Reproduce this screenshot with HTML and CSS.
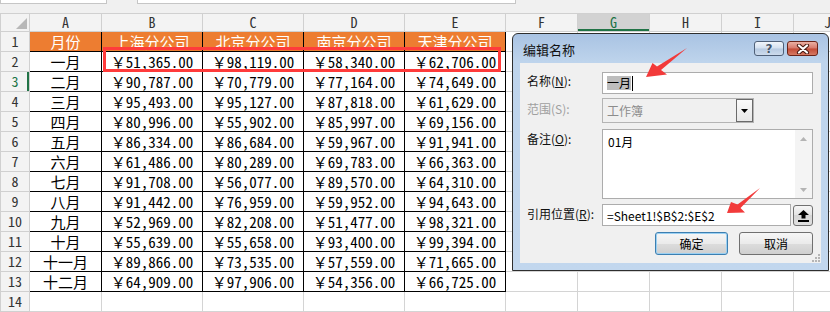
FILE: index.html
```html
<!DOCTYPE html>
<html lang="zh-CN">
<head>
    <meta charset="UTF-8">
    <title>编辑名称</title>
    <link rel="stylesheet" href="styles.css">
</head>
<body>
    <div class="topbar">
        <span class="namebox"></span>
        <span class="fxbox"></span>
    </div>

    <table class="sheet">
        <colgroup>
            <col class="w-row"><col class="w-a"><col class="w-b"><col class="w-b"><col class="w-b"><col class="w-b">
            <col class="w-a"><col class="w-a"><col class="w-a"><col class="w-a"><col class="w-a">
        </colgroup>
        <thead>
            <tr class="colhead">
                <th class="corner"><svg width="11" height="11" viewBox="0 0 11 11"><polygon points="11,0 11,11 0,11" fill="#b8b8b8"/></svg></th>
                <th>A</th><th>B</th><th>C</th><th>D</th><th>E</th><th>F</th><th class="active">G</th><th>H</th><th>I</th><th class="edge">J</th>
            </tr>
        </thead>
        <tbody>
            <tr><th>1</th><td class="b hd">月份</td><td class="b hd">上海分公司</td><td class="b hd">北京分公司</td><td class="b hd">南京分公司</td><td class="b hd">天津分公司</td><td></td><td></td><td></td><td></td><td></td></tr>
            <tr><th>2</th><td class="b">一月</td><td class="b">￥51,365.00</td><td class="b">￥98,119.00</td><td class="b">￥58,340.00</td><td class="b">￥62,706.00</td><td></td><td></td><td></td><td></td><td></td></tr>
            <tr><th class="active">3</th><td class="b">二月</td><td class="b">￥90,787.00</td><td class="b">￥70,779.00</td><td class="b">￥77,164.00</td><td class="b">￥74,649.00</td><td></td><td></td><td></td><td></td><td></td></tr>
            <tr><th>4</th><td class="b">三月</td><td class="b">￥95,493.00</td><td class="b">￥95,127.00</td><td class="b">￥87,818.00</td><td class="b">￥61,629.00</td><td></td><td></td><td></td><td></td><td></td></tr>
            <tr><th>5</th><td class="b">四月</td><td class="b">￥80,996.00</td><td class="b">￥55,902.00</td><td class="b">￥85,997.00</td><td class="b">￥69,156.00</td><td></td><td></td><td></td><td></td><td></td></tr>
            <tr><th>6</th><td class="b">五月</td><td class="b">￥86,334.00</td><td class="b">￥86,684.00</td><td class="b">￥59,967.00</td><td class="b">￥91,941.00</td><td></td><td></td><td></td><td></td><td></td></tr>
            <tr><th>7</th><td class="b">六月</td><td class="b">￥61,486.00</td><td class="b">￥80,289.00</td><td class="b">￥69,783.00</td><td class="b">￥66,363.00</td><td></td><td></td><td></td><td></td><td></td></tr>
            <tr><th>8</th><td class="b">七月</td><td class="b">￥91,708.00</td><td class="b">￥56,077.00</td><td class="b">￥89,570.00</td><td class="b">￥64,310.00</td><td></td><td></td><td></td><td></td><td></td></tr>
            <tr><th>9</th><td class="b">八月</td><td class="b">￥91,442.00</td><td class="b">￥76,959.00</td><td class="b">￥59,952.00</td><td class="b">￥94,643.00</td><td></td><td></td><td></td><td></td><td></td></tr>
            <tr><th>10</th><td class="b">九月</td><td class="b">￥52,969.00</td><td class="b">￥82,208.00</td><td class="b">￥51,477.00</td><td class="b">￥98,321.00</td><td></td><td></td><td></td><td></td><td></td></tr>
            <tr><th>11</th><td class="b">十月</td><td class="b">￥55,639.00</td><td class="b">￥55,658.00</td><td class="b">￥93,400.00</td><td class="b">￥99,394.00</td><td></td><td></td><td></td><td></td><td></td></tr>
            <tr><th>12</th><td class="b">十一月</td><td class="b">￥89,866.00</td><td class="b">￥73,535.00</td><td class="b">￥57,559.00</td><td class="b">￥71,665.00</td><td></td><td></td><td></td><td></td><td></td></tr>
            <tr><th>13</th><td class="b">十二月</td><td class="b">￥64,909.00</td><td class="b">￥97,906.00</td><td class="b">￥54,356.00</td><td class="b">￥66,725.00</td><td></td><td></td><td></td><td></td><td></td></tr>
            <tr><th>14</th><td></td><td></td><td></td><td></td><td></td><td></td><td></td><td></td><td></td><td></td></tr>
            <tr class="last"><th></th><td></td><td></td><td></td><td></td><td></td><td></td><td></td><td></td><td></td><td></td></tr>
        </tbody>
    </table>

    <!-- range highlight B2:E2 -->
    <div class="mark"></div>

    <div class="dialog">
        <div class="titlebar">
            <span class="title">编辑名称</span>
            <div class="tbtns">
                <span class="tbtn help">?</span>
                <span class="tbtn close">
                    <svg width="14" height="10" viewBox="0 0 14 10">
                        <path d="M3 1.5 L11 8.5 M11 1.5 L3 8.5" stroke="#4a1a12" stroke-width="4.2" stroke-linecap="round"/>
                        <path d="M3 1.5 L11 8.5 M11 1.5 L3 8.5" stroke="#fff" stroke-width="2.2" stroke-linecap="round"/>
                    </svg>
                </span>
            </div>
        </div>
        <div class="panel">
            <div class="row r-name">
                <label>名称(<u>N</u>):</label>
                <div class="field"><span class="selected">一月</span><span class="caret"></span></div>
            </div>
            <div class="row r-scope">
                <label class="disabled">范围(S):</label>
                <div class="combo">
                    <span>工作簿</span>
                    <span class="drop"><svg width="7" height="4" viewBox="0 0 7 4"><polygon points="0,0 7,0 3.5,4" fill="#000"/></svg></span>
                </div>
            </div>
            <div class="row r-note">
                <label>备注(<u>O</u>):</label>
                <div class="area">
                    <span class="note-text">01月</span>
                    <div class="vscroll">
                        <svg width="7" height="4" viewBox="0 0 7 4"><polygon points="3.5,0 7,4 0,4" fill="#b4b4b4"/></svg>
                        <svg width="7" height="4" viewBox="0 0 7 4"><polygon points="0,0 7,0 3.5,4" fill="#b4b4b4"/></svg>
                    </div>
                </div>
            </div>
            <div class="row r-ref">
                <label>引用位置(<u>R</u>):</label>
                <div class="refwrap">
                    <div class="field ref">=Sheet1!$B$2:$E$2</div>
                    <span class="refbtn">
                        <svg width="11" height="12" viewBox="0 0 11 12">
                            <polygon points="5.5,0 11,5 7.5,5 7.5,8.5 3.5,8.5 3.5,5 0,5" fill="#000"/>
                            <rect x="0" y="10" width="11" height="2" fill="#000"/>
                        </svg>
                    </span>
                </div>
            </div>
            <div class="actions">
                <button class="btn default">确定</button>
                <button class="btn cancel">取消</button>
            </div>
            <svg class="grip" width="10" height="10" viewBox="0 0 10 10">
                <g fill="#b5b5b5">
                    <rect x="8" y="2" width="2" height="2"/>
                    <rect x="5" y="5" width="2" height="2"/><rect x="8" y="5" width="2" height="2"/>
                    <rect x="2" y="8" width="2" height="2"/><rect x="5" y="8" width="2" height="2"/><rect x="8" y="8" width="2" height="2"/>
                </g>
            </svg>
        </div>
    </div>

    <svg class="arrows" width="830" height="312" viewBox="0 0 830 312">
        <polygon points="687,48 661,70 667,74.5 646,77 652.5,63 657,66.5" fill="#f23a3a"/>
        <polygon points="760,188 740.5,208 745,212.5 727,213 731,202 737.5,204.5" fill="#f23a3a"/>
    </svg>
</body>
</html>
```

FILE: styles.css
```css
body {
    margin: 0;
    width: 830px;
    height: 312px;
    overflow: hidden;
    position: relative;
    background: #fff;
    font-family: "Noto Sans CJK SC", sans-serif;
    color: #000;
}

/* formula bar remains */
.topbar {
    height: 13px;
    background: #f0f0f0;
    display: flex;
    align-items: flex-start;
}
.namebox,
.fxbox {
    height: 3px;
    background: #fff;
    border: 1px solid #c6c6c6;
    border-top: none;
}
.namebox {
    width: 105px;
}
.fxbox {
    margin-left: 30px;
    width: 377px;
}

/* worksheet */
.sheet {
    border-collapse: collapse;
    table-layout: fixed;
    width: 866px;
    font-family: "Noto Sans Mono CJK SC", "Noto Sans CJK SC", monospace;
}
.w-row { width: 29px; }
.w-a { width: 72px; }
.w-b { width: 101px; }

.sheet th,
.sheet td {
    border: 1px solid #d4d4d4;
    padding: 0;
    white-space: nowrap;
}
.sheet tr {
    height: 20px;
}
.sheet .colhead {
    height: 18px;
}
.sheet tr.last {
    height: 4px;
}
.sheet th {
    background: #f3f3f3;
    border-color: #d0d0d0;
    font-weight: normal;
    font-size: 14px;
    color: #333;
    text-align: center;
    line-height: 15px;
}
.sheet th.edge {
    text-align: left;
    padding-left: 30px;
    overflow: hidden;
}
.sheet th.corner {
    vertical-align: bottom;
    text-align: right;
}
.corner svg {
    display: block;
    margin: 0 2px 2px auto;
}
.colhead th.active {
    background: #d2d2d2;
    color: #217346;
    box-shadow: inset 0 -2px 0 #217346;
}
tbody th.active {
    color: #217346;
    box-shadow: inset -2px 0 0 #217346;
}
.sheet td {
    font-size: 15px;
    line-height: 17px;
    text-align: center;
}
.sheet td.b {
    border-color: #000;
}
.sheet td.hd {
    background: #ed7d31;
    color: #fff;
}

.mark {
    position: absolute;
    left: 103px;
    top: 47px;
    width: 398px;
    height: 25px;
    box-sizing: border-box;
    border: 3px solid #ff3b3b;
}

/* edit name dialog */
.dialog {
    position: absolute;
    left: 512px;
    top: 33px;
    width: 317px;
    height: 238px;
    box-sizing: border-box;
    border: 1px solid #2e2e2e;
    border-radius: 6px 6px 0 0;
    background: linear-gradient(#a9c3e3, #bed4ec 28px, #c2d7ee);
    padding: 0 7px 7px;
    font-size: 12px;
}
.titlebar {
    height: 29px;
    display: flex;
    align-items: center;
    justify-content: space-between;
}
.title {
    padding-left: 3px;
    font-size: 13px;
    padding-top: 2px;
    color: #111;
}
.tbtns {
    display: flex;
    gap: 3px;
    margin-right: 3px;
}
.tbtn {
    height: 15px;
    box-sizing: border-box;
    border-radius: 3px;
    display: flex;
    align-items: center;
    justify-content: center;
}
.help {
    width: 30px;
    border: 1px solid #4f6078;
    background: linear-gradient(#f0f5fb, #d3e0ef 48%, #b6cae2 52%, #cddbec);
    color: #44556a;
    font-weight: bold;
    font-size: 12px;
    font-family: "DejaVu Sans", sans-serif;
    text-shadow: 0 0 1px #fff;
}
.close {
    width: 31px;
    border: 1px solid #6b2318;
    background: linear-gradient(#eab0a3, #d7786a 48%, #c24a35 52%, #d67a64);
}

.panel {
    position: relative;
    height: 200px;
    background: #f0f0f0;
    padding: 9px 8px 0 7px;
    box-sizing: border-box;
}
.row {
    display: grid;
    grid-template-columns: 75px 211px;
}
.row label {
    padding-top: 1px;
    line-height: 15px;
    color: #111;
}
.row label.disabled {
    color: #a0a0a0;
}
.r-scope { margin-top: 4px; }
.r-note { margin-top: 6px; }
.r-ref { margin-top: 5px; }
.r-scope label { padding-top: 3px; }
.r-note label,
.r-ref label { padding-top: 2px; }

.field {
    height: 22px;
    box-sizing: border-box;
    border: 1px solid #acacac;
    background: #fff;
    display: flex;
    align-items: center;
    padding-left: 4px;
}
.selected {
    background: #bdbdbd;
    line-height: 14px;
    font-size: 12px;
}
.caret {
    width: 1px;
    height: 15px;
    background: #000;
    margin-left: 1px;
}
.combo {
    height: 25px;
    width: 152px;
    box-sizing: border-box;
    border: 1px solid #b4b4b4;
    background: #f0f0f0;
    color: #8c8c8c;
    display: flex;
    align-items: center;
    justify-content: space-between;
    padding-left: 4px;
}
.drop {
    width: 17px;
    height: 23px;
    box-sizing: border-box;
    border: 1px solid #6a6a6a;
    background: linear-gradient(#fafafa, #e8e8e8);
    display: flex;
    align-items: center;
    justify-content: center;
}
.area {
    height: 70px;
    box-sizing: border-box;
    border: 1px solid #acacac;
    background: #fff;
    display: flex;
    justify-content: space-between;
}
.note-text {
    padding: 4px 0 0 5px;
    line-height: 15px;
}
.vscroll {
    width: 17px;
    background: #f4f4f4;
    display: flex;
    flex-direction: column;
    justify-content: space-between;
    align-items: center;
    padding: 7px 0 6px;
    box-sizing: border-box;
}
.refwrap {
    display: flex;
    justify-content: space-between;
}
.ref {
    width: 189px;
    font-size: 12px;
}
.refbtn {
    width: 20px;
    height: 21px;
    box-sizing: border-box;
    border: 1px solid #707070;
    border-radius: 3px;
    background: linear-gradient(#f6f6f6, #e2e2e2 50%, #d6d6d6 50%, #e0e0e0);
    display: flex;
    align-items: center;
    justify-content: center;
    margin-top: 1px;
}
.actions {
    display: flex;
    justify-content: flex-end;
    gap: 11px;
    margin-top: 6px;
}
.btn {
    height: 23px;
    box-sizing: border-box;
    border: 1px solid #707070;
    border-radius: 3px;
    background: linear-gradient(#f6f6f6, #ebebeb 50%, #dddddd 50%, #cfcfcf);
    font-family: "Noto Sans CJK SC", sans-serif;
    font-size: 12px;
    padding: 0;
    color: #000;
}
.btn.default {
    width: 73px;
    border-color: #3c7fb1;
    box-shadow: inset 0 0 0 1px #9bd0f2;
}
.btn.cancel {
    width: 74px;
}
.grip {
    position: absolute;
    right: 1px;
    bottom: 1px;
}

.arrows {
    position: absolute;
    left: 0;
    top: 0;
    pointer-events: none;
}
```
